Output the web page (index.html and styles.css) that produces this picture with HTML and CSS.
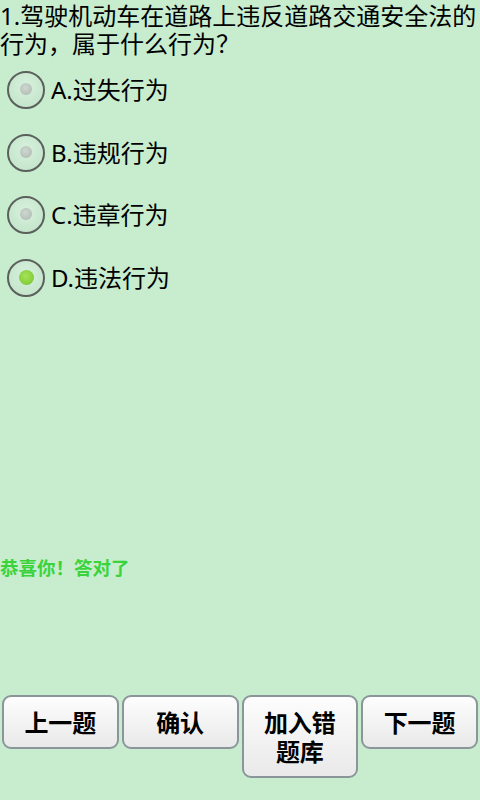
FILE: index.html
```html
<!DOCTYPE html>
<html lang="zh-CN">
<head>
<meta charset="utf-8">
<title>题目</title>
<link rel="stylesheet" href="styles.css">
</head>
<body>
<div class="page">
  <div class="question">1.驾驶机动车在道路上违反道路交通安全法的行为，属于什么行为？</div>
  <div class="options">
    <div class="option"><span class="radio"><span class="dot"></span></span><span class="label">A.过失行为</span></div>
    <div class="option"><span class="radio"><span class="dot"></span></span><span class="label">B.违规行为</span></div>
    <div class="option"><span class="radio"><span class="dot"></span></span><span class="label">C.违章行为</span></div>
    <div class="option"><span class="radio checked"><span class="dot"></span></span><span class="label">D.违法行为</span></div>
  </div>
  <div class="message">恭喜你！答对了</div>
  <div class="buttons">
    <div class="btn">上一题</div>
    <div class="btn">确认</div>
    <div class="btn">加入错<br>题库</div>
    <div class="btn">下一题</div>
  </div>
</div>
</body>
</html>
```

FILE: styles.css
```css
html, body {
  margin: 0;
  padding: 0;
  background: #c7ecce;
}
body {
  font-family: "Noto Sans", "Noto Sans CJK SC", sans-serif;
  color: #000;
}
.page {
  width: 480px;
  height: 800px;
  display: flex;
  flex-direction: column;
}
.question {
  font-size: 24px;
  line-height: 28px;
  padding: 2px 0 0 0;
  height: 59px;
  box-sizing: border-box;
}
.options {
  display: flex;
  flex-direction: column;
}
.option {
  height: 62.5px;
  display: flex;
  align-items: center;
  padding-left: 7px;
}
.radio {
  width: 38px;
  height: 38px;
  box-sizing: border-box;
  border-radius: 50%;
  border: 2px solid #5b605d;
  background: radial-gradient(circle at 50% 40%, #d8f1dd 0%, #c6e6cd 70%, #b9d8c0 100%);
  display: flex;
  align-items: center;
  justify-content: center;
  margin-right: 6px;
}
.dot {
  width: 12px;
  height: 12px;
  border-radius: 50%;
  background: radial-gradient(circle at 45% 40%, #ced8d1 0%, #b2bdb5 80%, #9ea9a1 100%);
  margin-top: -2px;
}
.checked .dot {
  width: 15px;
  height: 15px;
  margin-top: -1px;
  background: radial-gradient(circle at 45% 40%, #a6e35a 0%, #86cf3a 65%, #5aa628 100%);
}
.label {
  font-size: 24px;
  line-height: 28px;
}
.message {
  margin-top: 246px;
  font-size: 18.5px;
  line-height: 24px;
  font-weight: bold;
  color: #3ad43a;
  font-family: "Noto Sans CJK SC", sans-serif;
}
.buttons {
  margin-top: auto;
  margin-bottom: 22px;
  display: flex;
  align-items: flex-start;
  gap: 3px;
  padding: 0 2px;
}
.btn {
  flex: 1;
  box-sizing: border-box;
  border: 2px solid #8b969a;
  border-radius: 9px;
  background: linear-gradient(#fdfdfd, #e9e9ea);
  padding: 10.5px 4px 11px;
  text-align: center;
  font-size: 24px;
  line-height: 29px;
  font-weight: bold;
  font-family: "Noto Sans CJK SC", sans-serif;
}
```
